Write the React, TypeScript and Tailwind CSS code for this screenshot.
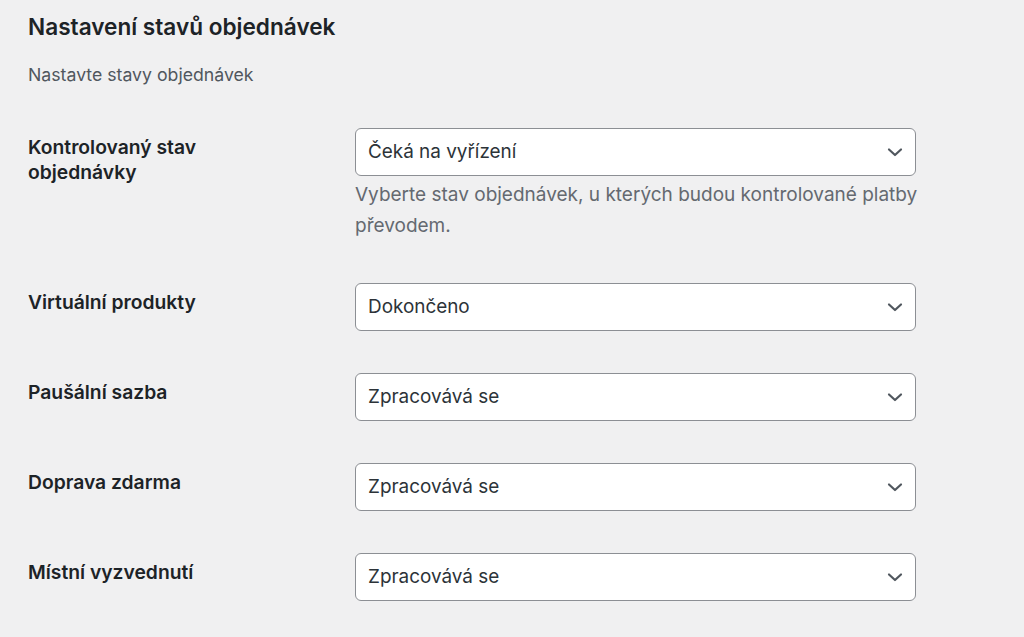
import React from "react";

const font = { fontFamily: "Inter, 'Noto Sans', sans-serif" };

function Chevron() {
  return (
    <svg width="18" height="12" viewBox="0 0 18 12" fill="none" className="shrink-0">
      <path d="M3 3.5 L9 9 L15 3.5" stroke="#50575e" strokeWidth="2.2" strokeLinecap="round" strokeLinejoin="round" />
    </svg>
  );
}

function Select({ value }: { value: string }) {
  return (
    <div className="flex h-[48px] w-[561px] items-center justify-between rounded-[6px] border border-[#8c8f94] bg-white pl-[12px] pr-[11px]">
      <span className="text-[18.9px] text-[#2c3338]">{value}</span>
      <Chevron />
    </div>
  );
}

function Row({ label, value, desc }: { label: React.ReactNode; value: string; desc?: React.ReactNode }) {
  return (
    <div className="flex">
      <div className="w-[327px] pt-[7px] text-[19.3px] font-semibold leading-[25px] text-[#1d2327]">{label}</div>
      <div className="flex flex-col">
        <Select value={value} />
        {desc && (
          <p className="mt-[3px] w-[580px] text-[19px] leading-[31px] text-[#646970]">{desc}</p>
        )}
      </div>
    </div>
  );
}

export default function App() {
  return (
    <div className="min-h-[637px] w-[1024px] bg-[#f0f0f1] pl-[28px] pt-[12px]" style={font}>
      <h2 className="text-[22.6px] font-semibold leading-[30px] text-[#1d2327]">Nastavení stavů objednávek</h2>
      <p className="mt-[20px] text-[17.7px] leading-[25px] text-[#50575e]">Nastavte stavy objednávek</p>
      <div className="mt-[41px] flex flex-col gap-[42px]">
        <Row
          label={<>Kontrolovaný stav<br />objednávky</>}
          value="Čeká na vyřízení"
          desc="Vyberte stav objednávek, u kterých budou kontrolované platby převodem."
        />
        <Row label="Virtuální produkty" value="Dokončeno" />
        <Row label="Paušální sazba" value="Zpracovává se" />
        <Row label="Doprava zdarma" value="Zpracovává se" />
        <Row label="Místní vyzvednutí" value="Zpracovává se" />
      </div>
    </div>
  );
}
